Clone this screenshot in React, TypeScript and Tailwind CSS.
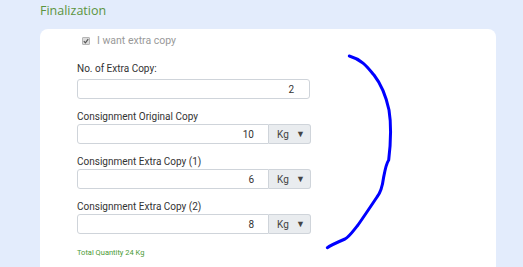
import React from 'react';

interface QtyRowProps {
    label: string;
    value: string;
}

const QtyRow: React.FC<QtyRowProps> = ({ label, value }) => (
    <div className="mt-[12px]">
        <div className="text-[10px] leading-[12px] text-[#333]">{label}</div>
        <div className="mt-[1px] flex h-[20px] w-[234px]">
            <div className="flex flex-1 items-center justify-end rounded-l-[3px] border border-[#cfd4da] bg-white pr-[14px] text-[10px] text-[#333]">
                {value}
            </div>
            <div className="flex w-[42px] items-center justify-between rounded-r-[3px] border border-l-0 border-[#cfd4da] bg-[#e9ecef] pl-[8px] pr-[5px] text-[10px] text-[#444]">
                <span>Kg</span>
                <span className="text-[9px] leading-none text-[#444]">▼</span>
            </div>
        </div>
    </div>
);

// hand drawn annotation over the form
const Scribble: React.FC = () => (
    <svg className="pointer-events-none absolute left-0 top-0" width="523" height="267" viewBox="0 0 523 267">
        <path
            d="M349.3 56 C 363 60, 368 68, 374 75 C 381 84, 386 96, 389 110 C 391.5 125, 390.5 145, 388.7 160 C 386 164, 385 170, 383.5 178 C 382.5 186, 381 192, 377 197 C 371 206, 365 215, 358 225 C 353 231, 350 236, 345 239 C 338 242, 331 245, 327.3 247.7"
            fill="none"
            stroke="#0000ff"
            strokeWidth="3"
            strokeLinecap="round"
            strokeLinejoin="round"
        />
    </svg>
);

export default function App() {
    return (
        <div className="relative h-[267px] w-[523px] overflow-hidden bg-[#e3ecfc] font-['Roboto',sans-serif]">
            <div className="pl-[40px] pt-[2px] font-['Open_Sans',sans-serif] text-[12.5px] font-medium leading-[18px] text-[#5b9440]">
                Finalization
            </div>

            <div className="ml-[40px] mt-[9px] h-[260px] w-[456px] rounded-[8px] bg-white pl-[37px] pt-[6px]">
                {/* extra copy toggle */}
                <div className="flex h-[12px] items-center pl-[5px]">
                    <span className="flex h-[8px] w-[8px] items-center justify-center rounded-[1px] border border-[#b5b5b5] bg-[#dcdcdc]">
                        <svg width="6" height="6" viewBox="0 0 6 6">
                            <path d="M0.8 3.2 L2.4 4.8 L5.2 1.2" fill="none" stroke="#555" strokeWidth="1.2" />
                        </svg>
                    </span>
                    <span className="ml-[7px] text-[10.5px] leading-[12px] text-[#999]">I want extra copy</span>
                </div>

                <div className="mt-[16px] text-[10px] leading-[12px] text-[#333]">No. of Extra Copy:</div>
                <div className="mt-[4px] flex h-[20px] w-[233px] items-center justify-end rounded-[3px] border border-[#cfd4da] pr-[15px] text-[10px] text-[#333]">
                    2
                </div>

                <QtyRow label="Consignment Original Copy" value="10" />
                <QtyRow label="Consignment Extra Copy (1)" value="6" />
                <QtyRow label="Consignment Extra Copy (2)" value="8" />

                <div className="mt-[14px] text-[7.5px] leading-[10px] text-[#4b9a34]">Total Quantity 24 Kg</div>
            </div>

            <Scribble />
        </div>
    );
}
